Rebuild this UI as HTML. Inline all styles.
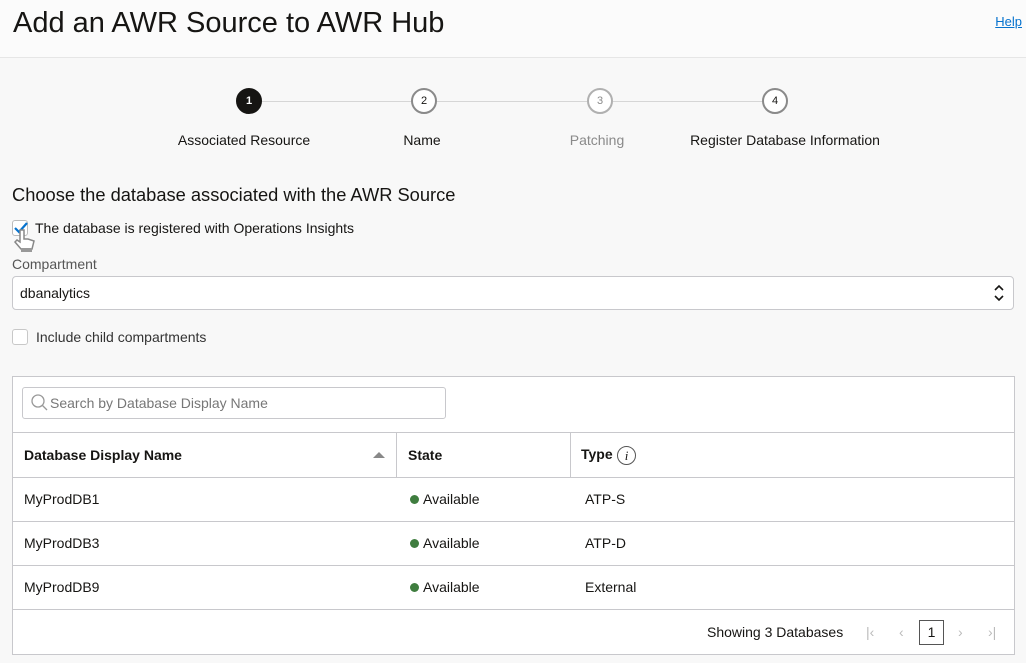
<!DOCTYPE html>
<html><head><meta charset="utf-8"><style>
*{box-sizing:border-box;margin:0;padding:0}
body{width:1026px;height:663px;overflow:hidden;background:#f8f8f8;font-family:"Liberation Sans",sans-serif;color:#161513;position:relative;font-size:14px}
.hdr{position:absolute;left:0;top:0;width:1026px;height:58px;background:#fbfbfb;border-bottom:1px solid #e6e6e6}
.hdr h1{position:absolute;left:13px;top:7px;font-size:29px;font-weight:normal;color:#161513}
.hdr a{position:absolute;right:4px;top:14px;font-size:13px;color:#0572ce;text-decoration:underline}
.abs{position:absolute}
.circ{position:absolute;width:26px;height:26px;border-radius:50%;border:2px solid #8a8a8a;background:#fff;font-size:11px;text-align:center;line-height:22px}
.line{position:absolute;height:1px;background:#d6d6d6;top:101px}
.lbl{position:absolute;top:132px;font-size:14px;white-space:nowrap;transform:translateX(-50%)}
.box{position:absolute;left:12px;top:376px;width:1003px;height:279px;background:#fff;border:1px solid #c8c8cc}
.row{position:absolute;left:0;width:1001px;border-top:1px solid #c8c8cc}
.cell{position:absolute;top:0;font-size:14px}
.dot{display:inline-block;width:9px;height:9px;border-radius:50%;background:#3f7d3f;margin-right:4px;vertical-align:-0px}
</style></head><body>
<div class="hdr"><h1>Add an AWR Source to AWR Hub</h1><a>Help</a></div>

<div class="line" style="left:262px;width:150px"></div>
<div class="line" style="left:437px;width:150px"></div>
<div class="line" style="left:613px;width:150px"></div>
<div class="circ" style="left:236px;top:88px;background:#161513;border-color:#161513;color:#fff;font-weight:bold">1</div>
<div class="circ" style="left:411px;top:88px;color:#161513">2</div>
<div class="circ" style="left:587px;top:88px;color:#8a8a8a;border-color:#b0b0b0">3</div>
<div class="circ" style="left:762px;top:88px;color:#161513">4</div>
<div class="lbl" style="left:244px">Associated Resource</div>
<div class="lbl" style="left:422px">Name</div>
<div class="lbl" style="left:597px;color:#8a8a8a">Patching</div>
<div class="lbl" style="left:785px">Register Database Information</div>

<div class="abs" style="left:12px;top:184px;font-size:18.3px">Choose the database associated with the AWR Source</div>
<div class="abs" style="left:12px;top:220px;width:16px;height:16px;border:1px solid #bbb;border-radius:3px;background:#fff"></div>
<svg class="abs" style="left:12px;top:219px" width="18" height="18"><path d="M3 9 L7 13 L15 4" stroke="#0572ce" stroke-width="2.2" fill="none"/></svg>
<svg class="abs" style="left:12px;top:228px" width="30" height="26"><path d="M8 2 v12 l-3 -2 l-2 2 l6 7 h11 l2 -8 l-6 -2 h-4 v-9 z" fill="#fff" stroke="#888" stroke-width="1.5"/><rect x="9" y="20" width="11" height="4" fill="#999"/></svg>
<div class="abs" style="left:35px;top:220px;font-size:14px">The database is registered with Operations Insights</div>
<div class="abs" style="left:12px;top:256px;font-size:14px;color:#555">Compartment</div>
<div class="abs" style="left:12px;top:276px;width:1002px;height:34px;background:#fff;border:1px solid #c8c8cc;border-radius:4px"></div>
<div class="abs" style="left:20px;top:285px;font-size:14px">dbanalytics</div>
<svg class="abs" style="left:992px;top:283px" width="14" height="20"><path d="M3 7 L7 3 L11 7 M3 13 L7 17 L11 13" stroke="#161513" stroke-width="1.6" fill="none"/></svg>
<div class="abs" style="left:12px;top:329px;width:16px;height:16px;border:1px solid #c8c8c8;border-radius:3px;background:#fff"></div>
<div class="abs" style="left:36px;top:329px;font-size:14px;color:#333">Include child compartments</div>

<div class="box">
  <div class="abs" style="left:9px;top:10px;width:424px;height:32px;border:1px solid #c8c8cc;border-radius:3px"></div>
  <svg class="abs" style="left:17px;top:16px" width="20" height="20"><circle cx="8" cy="8" r="6" stroke="#999" stroke-width="1.3" fill="none"/><path d="M12.5 12.5 L17 17" stroke="#999" stroke-width="1.3"/></svg>
  <div class="abs" style="left:37px;top:18px;font-size:14px;color:#777">Search by Database Display Name</div>

  <div class="row" style="top:55px;height:45px">
    <div class="cell" style="left:11px;top:14px;font-weight:bold">Database Display Name</div>
    <svg class="abs" style="left:360px;top:18px" width="12" height="8"><path d="M0 7 L6 1 L12 7 z" fill="#888"/></svg>
    <div class="abs" style="left:383px;top:0;width:1px;height:45px;background:#c8c8cc"></div>
    <div class="cell" style="left:395px;top:14px;font-weight:bold">State</div>
    <div class="abs" style="left:557px;top:0;width:1px;height:45px;background:#c8c8cc"></div>
    <div class="cell" style="left:568px;top:13px;font-weight:bold">Type</div>
    <div class="abs" style="left:604px;top:13px;width:19px;height:19px;border:1px solid #555;border-radius:50%;font-family:'Liberation Serif',serif;font-style:italic;font-size:13px;text-align:center;line-height:17px">i</div>
  </div>
  <div class="row" style="top:100px;height:44px"><div class="cell" style="left:11px;top:13px">MyProdDB1</div><div class="cell" style="left:397px;top:13px"><span class="dot"></span>Available</div><div class="cell" style="left:572px;top:13px">ATP-S</div></div>
  <div class="row" style="top:144px;height:44px"><div class="cell" style="left:11px;top:13px">MyProdDB3</div><div class="cell" style="left:397px;top:13px"><span class="dot"></span>Available</div><div class="cell" style="left:572px;top:13px">ATP-D</div></div>
  <div class="row" style="top:188px;height:44px"><div class="cell" style="left:11px;top:13px">MyProdDB9</div><div class="cell" style="left:397px;top:13px"><span class="dot"></span>Available</div><div class="cell" style="left:572px;top:13px">External</div></div>
  <div class="row" style="top:232px;height:45px;border-color:#c8c8cc">
    <div class="cell" style="left:694px;top:14px">Showing 3 Databases</div>
    <div class="cell" style="left:853px;top:14px;color:#bbb">|&lsaquo;</div>
    <div class="cell" style="left:886px;top:14px;color:#bbb">&lsaquo;</div>
    <div class="abs" style="left:906px;top:10px;width:25px;height:25px;border:1px solid #555;text-align:center;line-height:23px;font-size:14px">1</div>
    <div class="cell" style="left:945px;top:14px;color:#bbb">&rsaquo;</div>
    <div class="cell" style="left:975px;top:14px;color:#bbb">&rsaquo;|</div>
  </div>
</div>
</body></html>
